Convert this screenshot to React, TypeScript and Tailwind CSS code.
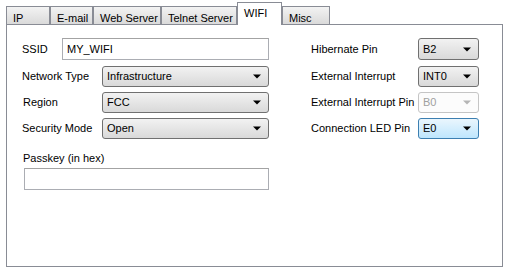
import { ReactNode } from "react";

const tabs = ["IP", "E-mail", "Web Server", "Telnet Server", "WIFI", "Misc"];
const tabWidths: Record<string, string> = {
  IP: "w-[44px]",
  "E-mail": "w-[43px]",
  "Web Server": "w-[68px]",
  "Telnet Server": "w-[76px]",
  WIFI: "w-[45px]",
  Misc: "w-[48px]",
};

function Arrow({ disabled }: { disabled?: boolean }) {
  return (
    <svg width="8" height="5" viewBox="0 0 8 5" className="shrink-0">
      <path d="M0 0.5 L8 0.5 L4 4.5 Z" fill={disabled ? "#b5b5b5" : "#000"} />
    </svg>
  );
}

function Select({
  value,
  width,
  variant = "normal",
}: {
  value: string;
  width: string;
  variant?: "normal" | "disabled" | "focused";
}) {
  const look =
    variant === "disabled"
      ? "border-[#c5c5c5] bg-[#fcfcfc] text-[#a0a0a0]"
      : variant === "focused"
        ? "border-[#3c7fb1] bg-gradient-to-b from-[#eaf6fd] to-[#bee6fd] text-black"
        : "border-[#707070] bg-gradient-to-b from-[#f2f2f2] to-[#d9d9d9] text-black";
  return (
    <div
      className={`${width} h-[21px] flex items-center justify-between pl-[4px] pr-[7px] border rounded-[3px] ${look}`}
    >
      <span className="leading-none">{value}</span>
      <Arrow disabled={variant === "disabled"} />
    </div>
  );
}

function Row({ label, labelW, children }: { label: string; labelW: string; children: ReactNode }) {
  return (
    <div className="flex items-center">
      <span className={`${labelW} shrink-0`}>{label}</span>
      {children}
    </div>
  );
}

export default function App() {
  return (
    <div className="w-[509px] h-[273px] bg-white text-[11px] text-black font-['Liberation_Sans',Arial,sans-serif] pl-[6px] pt-[2px]">
      <div className="flex items-end h-[22px]">
        {tabs.map((t) =>
          t === "WIFI" ? (
            <div
              key={t}
              className={`${tabWidths[t]} h-[23px] -mb-[1px] relative z-10 bg-white border border-b-0 border-[#898c95] pl-[6px] pt-[2px]`}
            >
              {t}
            </div>
          ) : (
            <div
              key={t}
              className={`${tabWidths[t]} h-[18px] bg-gradient-to-b from-[#f3f3f3] to-[#dadada] border border-b-0 border-[#898c95] pl-[6px] pt-[3px]`}
            >
              {t}
            </div>
          )
        )}
      </div>
      <div className="w-[497px] h-[243px] border border-[#898c95] bg-white flex pt-[13px] pl-[15px]">
        <div className="w-[247px] flex flex-col">
          <Row label="SSID" labelW="w-[40px]">
            <div className="w-[207px] h-[22px] border border-[#abadb3] border-t-[#a3a3a3] flex items-center pl-[4px]">
              MY_WIFI
            </div>
          </Row>
          <div className="mt-[6px] flex flex-col gap-[5px]">
            <Row label="Network Type" labelW="w-[80px]">
              <Select value="Infrastructure" width="w-[167px]" />
            </Row>
            <Row label="Region" labelW="w-[80px] pl-[1px]">
              <Select value="FCC" width="w-[167px]" />
            </Row>
            <Row label="Security Mode" labelW="w-[80px]">
              <Select value="Open" width="w-[167px]" />
            </Row>
          </div>
          <div className="mt-[12px] pl-[1px] h-[14px] leading-[14px]">Passkey (in hex)</div>
          <div className="mt-[3px] ml-[2px] w-[245px] h-[22px] border border-[#abadb3] border-t-[#a3a3a3]" />
        </div>
        <div className="ml-[42px] flex flex-col">
          <Row label="Hibernate Pin" labelW="w-[107px]">
            <Select value="B2" width="w-[61px] !h-[22px]" />
          </Row>
          <div className="mt-[6px] flex flex-col gap-[5px]">
            <Row label="External Interrupt" labelW="w-[107px]">
              <Select value="INT0" width="w-[61px]" />
            </Row>
            <Row label="External Interrupt Pin" labelW="w-[107px]">
              <Select value="B0" width="w-[61px]" variant="disabled" />
            </Row>
            <Row label="Connection LED Pin" labelW="w-[107px]">
              <Select value="E0" width="w-[61px]" variant="focused" />
            </Row>
          </div>
        </div>
      </div>
    </div>
  );
}
